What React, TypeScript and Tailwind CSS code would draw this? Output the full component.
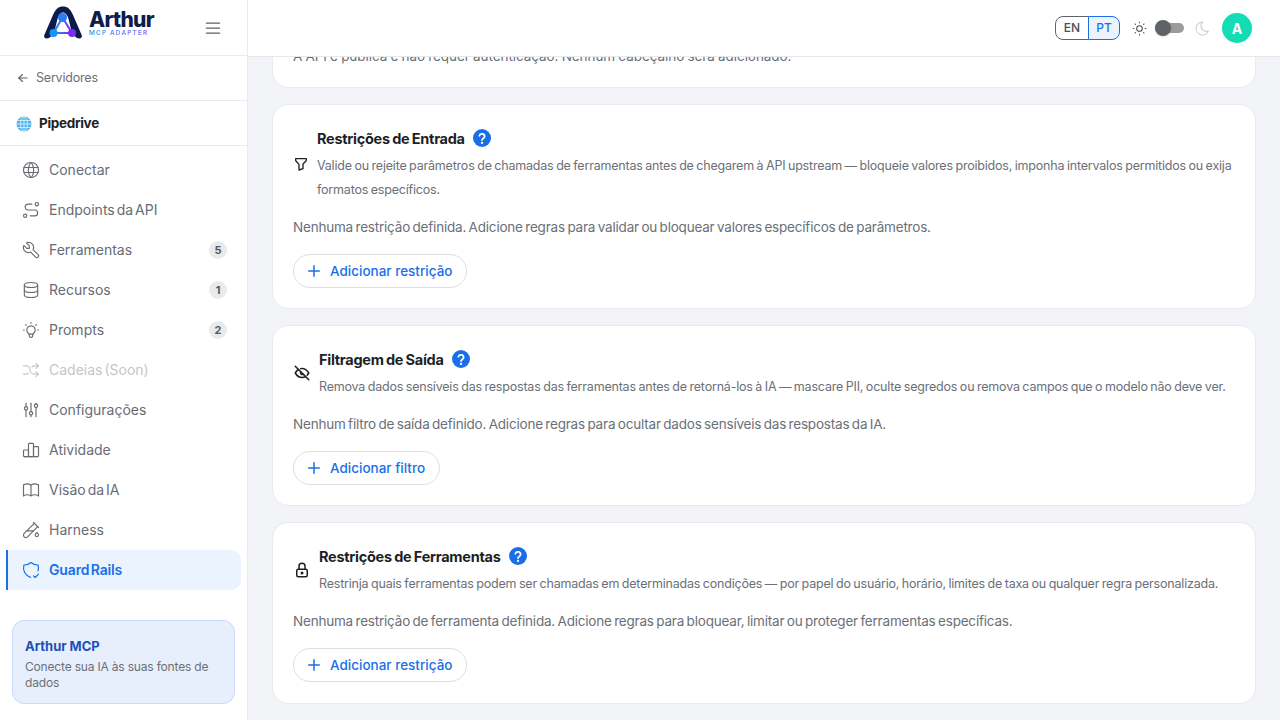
import {
  TbAdjustments,
  TbArrowLeft,
  TbArrowsShuffle,
  TbBook,
  TbBulb,
  TbChartBar,
  TbDatabase,
  TbEyeOff,
  TbFilter,
  TbLock,
  TbMenu2,
  TbMoon,
  TbPlus,
  TbRoute,
  TbShieldCheck,
  TbSun,
  TbTestPipe,
  TbTool,
  TbWorld,
} from "react-icons/tb";
import type { IconType } from "react-icons";

const font = "font-['Inter',sans-serif]";

type NavItem = { label: string; icon: IconType; badge?: number; disabled?: boolean; active?: boolean };

const navItems: NavItem[] = [
  { label: "Conectar", icon: TbWorld },
  { label: "Endpoints da API", icon: TbRoute },
  { label: "Ferramentas", icon: TbTool, badge: 5 },
  { label: "Recursos", icon: TbDatabase, badge: 1 },
  { label: "Prompts", icon: TbBulb, badge: 2 },
  { label: "Cadeias (Soon)", icon: TbArrowsShuffle, disabled: true },
  { label: "Configurações", icon: TbAdjustments },
  { label: "Atividade", icon: TbChartBar },
  { label: "Visão da IA", icon: TbBook },
  { label: "Harness", icon: TbTestPipe },
  { label: "Guard Rails", icon: TbShieldCheck, active: true },
];

function Logo() {
  return (
    <div className="mb-[10px] flex items-center gap-[7px]">
      <svg width="38" height="33" viewBox="0 0 38 33" fill="none">
        <defs>
          <linearGradient id="tri" x1="9" y1="28" x2="28" y2="28" gradientUnits="userSpaceOnUse">
            <stop stopColor="#1496f5" />
            <stop offset="1" stopColor="#7a2cf0" />
          </linearGradient>
        </defs>
        <path
          d="M2.500 32.500C.5 32.500-.3 30.500.3 29L9 9C11.500 3 14.500.5 19 .5S26.500 3 29 9L37.700 29C38.300 30.500 37.500 32.500 35.500 32.500C31 32.500 29 28 27 23L24.500 13C23.500 9 21 6.500 19 6.500S14.500 9 13.500 13L11 23C9 28 7 32.500 2.500 32.500Z"
          fill="#0d1b4c"
        />
        <path d="M18.500 11.500L9.500 27H28Z" stroke="url(#tri)" strokeWidth="2" strokeLinejoin="round" />
        <circle cx="18.500" cy="11.500" r="4.500" fill="#2b7cf6" />
        <circle cx="9.500" cy="27" r="4" fill="#1496f5" />
        <circle cx="28" cy="27" r="4" fill="#7a2cf0" />
      </svg>
      <div className="mt-[2px] flex flex-col">
        <span className="text-[21px] leading-[20px] font-extrabold tracking-[-0.7px] text-[#101d4a]">Arthur</span>
        <span className="bg-gradient-to-r from-[#1f9cf5] to-[#8a5cf6] bg-clip-text text-[6.500px] leading-[7px] font-semibold tracking-[1.100px] text-transparent">
          MCP ADAPTER
        </span>
      </div>
    </div>
  );
}

function Sidebar() {
  return (
    <aside className="flex h-full w-[248px] shrink-0 flex-col border-r border-[#e8eaef] bg-white">
      <div className="flex h-[56px] items-center justify-between border-b border-[#e8eaef] pr-[24px] pl-[44px]">
        <Logo />
        <TbMenu2 className="size-[20px] text-[#5f6368]" strokeWidth={1.5} />
      </div>
      <div className="flex h-[45px] items-center gap-[6px] border-b border-[#e8eaef] pl-[16px] text-[12.500px] tracking-[-0.2px] text-[#6b7078]">
        <TbArrowLeft className="size-[14px] text-[#5f6368]" />
        Servidores
      </div>
      <div className="flex h-[45px] items-center gap-[7px] border-b border-[#e8eaef] pt-[1px] pl-[16px] text-[13.500px] font-bold tracking-[-0.3px] text-[#1c1f26]">
        <svg width="16" height="16" viewBox="0 0 16 16" fill="none">
          <circle cx="8" cy="8" r="7.500" fill="#4fb4ee" />
          <g stroke="#e3f3fd" strokeWidth="0.800">
            <ellipse cx="8" cy="8" rx="3.500" ry="7.500" />
            <path d="M8 .5V15.500M.5 8H15.500M1.500 4.500H14.500M1.500 11.500H14.500" />
          </g>
        </svg>
        Pipedrive
      </div>
      <nav className="flex flex-col pt-[4px] [word-spacing:-2px]">
        {navItems.map((item) => (
          <div
            key={item.label}
            className={
              item.active
                ? "mx-[6px] flex h-[40px] items-center rounded-r-[10px] border-l-2 border-[#1a6fe8] bg-[#ebf3fe] pr-[14px] pl-[13px] font-semibold tracking-[-0.15px] text-[#1a6fe8]"
                : item.disabled
                  ? "mx-[6px] flex h-[40px] items-center pr-[14px] pl-[15px] text-[#c4c6ca]"
                  : "mx-[6px] flex h-[40px] items-center pr-[14px] pl-[15px] text-[#686c74]"
            }
          >
            <item.icon className="size-[20px] shrink-0" strokeWidth={1.4} />
            <span className="ml-[8px] text-[14px] leading-[20px]">{item.label}</span>
            {item.badge !== undefined && (
              <span className="ml-auto flex size-[18px] items-center justify-center rounded-full bg-[#e9eaec] text-[11px] font-bold text-[#55585f]">
                {item.badge}
              </span>
            )}
          </div>
        ))}
      </nav>
      <div className="mx-[12px] mt-auto mb-[16px] rounded-[12px] border border-[#c9dafb] bg-[#e8effc] px-[12px] pt-[15px] pb-[12px]">
        <div className="text-[13px] leading-[20px] font-bold text-[#1b4fb8]">Arthur MCP</div>
        <div className="mt-[3px] text-[12px] leading-[16px] tracking-[-0.18px] text-[#6b7078]">
          Conecte sua IA às suas fontes de dados
        </div>
      </div>
    </aside>
  );
}

function Header() {
  return (
    <header className="flex h-[57px] shrink-0 items-center justify-end border-b border-[#e6e8ec] bg-white pr-[28px]">
      <div className="flex h-[24px] text-[12px] font-medium">
        <span className="flex w-[34px] items-center justify-center rounded-l-[8px] border border-[#5f6368] text-[#4b4f57]">EN</span>
        <span className="-ml-px flex w-[32px] items-center justify-center rounded-r-[8px] border border-[#1a6fe8] bg-[#ebf3fe] text-[#1a6fe8]">PT</span>
      </div>
      <TbSun className="ml-[11px] size-[17px] text-[#4b4f57]" strokeWidth={1.5} />
      <div className="relative ml-[7px] h-[10px] w-[29px] rounded-full bg-[#9c9c9c]">
        <span className="absolute top-[-3px] left-0 size-[16px] rounded-full bg-[#5f6368] shadow-sm" />
      </div>
      <TbMoon className="ml-[10px] size-[17px] text-[#c9cbce]" strokeWidth={1.5} />
      <div className="ml-[11px] flex size-[30px] items-center justify-center rounded-full bg-[#14dcb4] text-[14px] font-bold text-white">A</div>
    </header>
  );
}

function HelpIcon() {
  return (
    <svg width="18" height="18" viewBox="0 0 24 24" className="-mt-[2px] shrink-0">
      <circle cx="12" cy="12" r="12" fill="#1a6fe8" />
      <path d="M8.500 9a3.600 3.600 0 0 1 7 1c0 2.400-3.500 2.600-3.500 4.700" fill="none" stroke="#fff" strokeWidth="2.400" strokeLinecap="round" />
      <circle cx="12" cy="18.500" r="1.500" fill="#fff" />
    </svg>
  );
}

type RailCard = {
  title: string;
  icon: IconType;
  iconClass: string;
  description: string;
  empty: string;
  action: string;
};

const cards: RailCard[] = [
  {
    title: "Restrições de Entrada",
    icon: TbFilter,
    iconClass: "size-[16px]",
    description:
      "Valide ou rejeite parâmetros de chamadas de ferramentas antes de chegarem à API upstream — bloqueie valores proibidos, imponha intervalos permitidos ou exija formatos específicos.",
    empty: "Nenhuma restrição definida. Adicione regras para validar ou bloquear valores específicos de parâmetros.",
    action: "Adicionar restrição",
  },
  {
    title: "Filtragem de Saída",
    icon: TbEyeOff,
    iconClass: "size-[18px]",
    description:
      "Remova dados sensíveis das respostas das ferramentas antes de retorná-los à IA — mascare PII, oculte segredos ou remova campos que o modelo não deve ver.",
    empty: "Nenhum filtro de saída definido. Adicione regras para ocultar dados sensíveis das respostas da IA.",
    action: "Adicionar filtro",
  },
  {
    title: "Restrições de Ferramentas",
    icon: TbLock,
    iconClass: "size-[18px]",
    description:
      "Restrinja quais ferramentas podem ser chamadas em determinadas condições — por papel do usuário, horário, limites de taxa ou qualquer regra personalizada.",
    empty: "Nenhuma restrição de ferramenta definida. Adicione regras para bloquear, limitar ou proteger ferramentas específicas.",
    action: "Adicionar restrição",
  },
];

function Card({ card }: { card: RailCard }) {
  return (
    <section className="rounded-[16px] border border-[#e8eaef] bg-white p-[20px] last:pb-[21px]">
      <div className="flex items-center gap-[8px]">
        <card.icon className={`${card.iconClass} shrink-0 text-[#1c1f26]`} />
        <div>
          <div className="mb-[2px] flex h-[27px] items-center gap-[8px]">
            <h3 className="text-[14.500px] font-bold tracking-[-0.27px] text-[#1c1f26] [word-spacing:-0.8px]">{card.title}</h3>
            <HelpIcon />
          </div>
          <p className="text-[12.500px] leading-[24px] tracking-[-0.2px] text-[#6b7078] [word-spacing:-0.7px]">{card.description}</p>
        </div>
      </div>
      <p className="mt-[13px] text-[13.500px] leading-[24px] tracking-[-0.2px] text-[#6b7078] [word-spacing:-1.100px]">{card.empty}</p>
      <button className="mt-[15px] flex h-[34px] items-center gap-[7px] rounded-full border border-[#dcdee3] pr-[14px] pl-[11px] text-[13.500px] font-medium text-[#1a6fe8]">
        <TbPlus className="size-[18px]" />
        {card.action}
      </button>
    </section>
  );
}

export default function App() {
  return (
    <div className={`flex h-[720px] w-[1280px] overflow-hidden bg-[#f2f4f7] ${font}`}>
      <Sidebar />
      <div className="flex min-w-0 flex-1 flex-col">
        <Header />
        <main className="flex-1 overflow-hidden">
          <div className="flex flex-col gap-[16px] px-[24px]">
            {/* page is scrolled: only the bottom of the first card shows */}
            <section className="-mt-[30px] h-[61px] rounded-b-[16px] border border-[#e8eaef] bg-white px-[20px] pt-[16px]">
              <p className="text-[13.500px] leading-[24px] tracking-[-0.06px] text-[#6b7078] [word-spacing:-0.5px]">
                A API é pública e não requer autenticação. Nenhum cabeçalho será adicionado.
              </p>
            </section>
            {cards.map((c) => (
              <Card key={c.title} card={c} />
            ))}
          </div>
        </main>
      </div>
    </div>
  );
}
